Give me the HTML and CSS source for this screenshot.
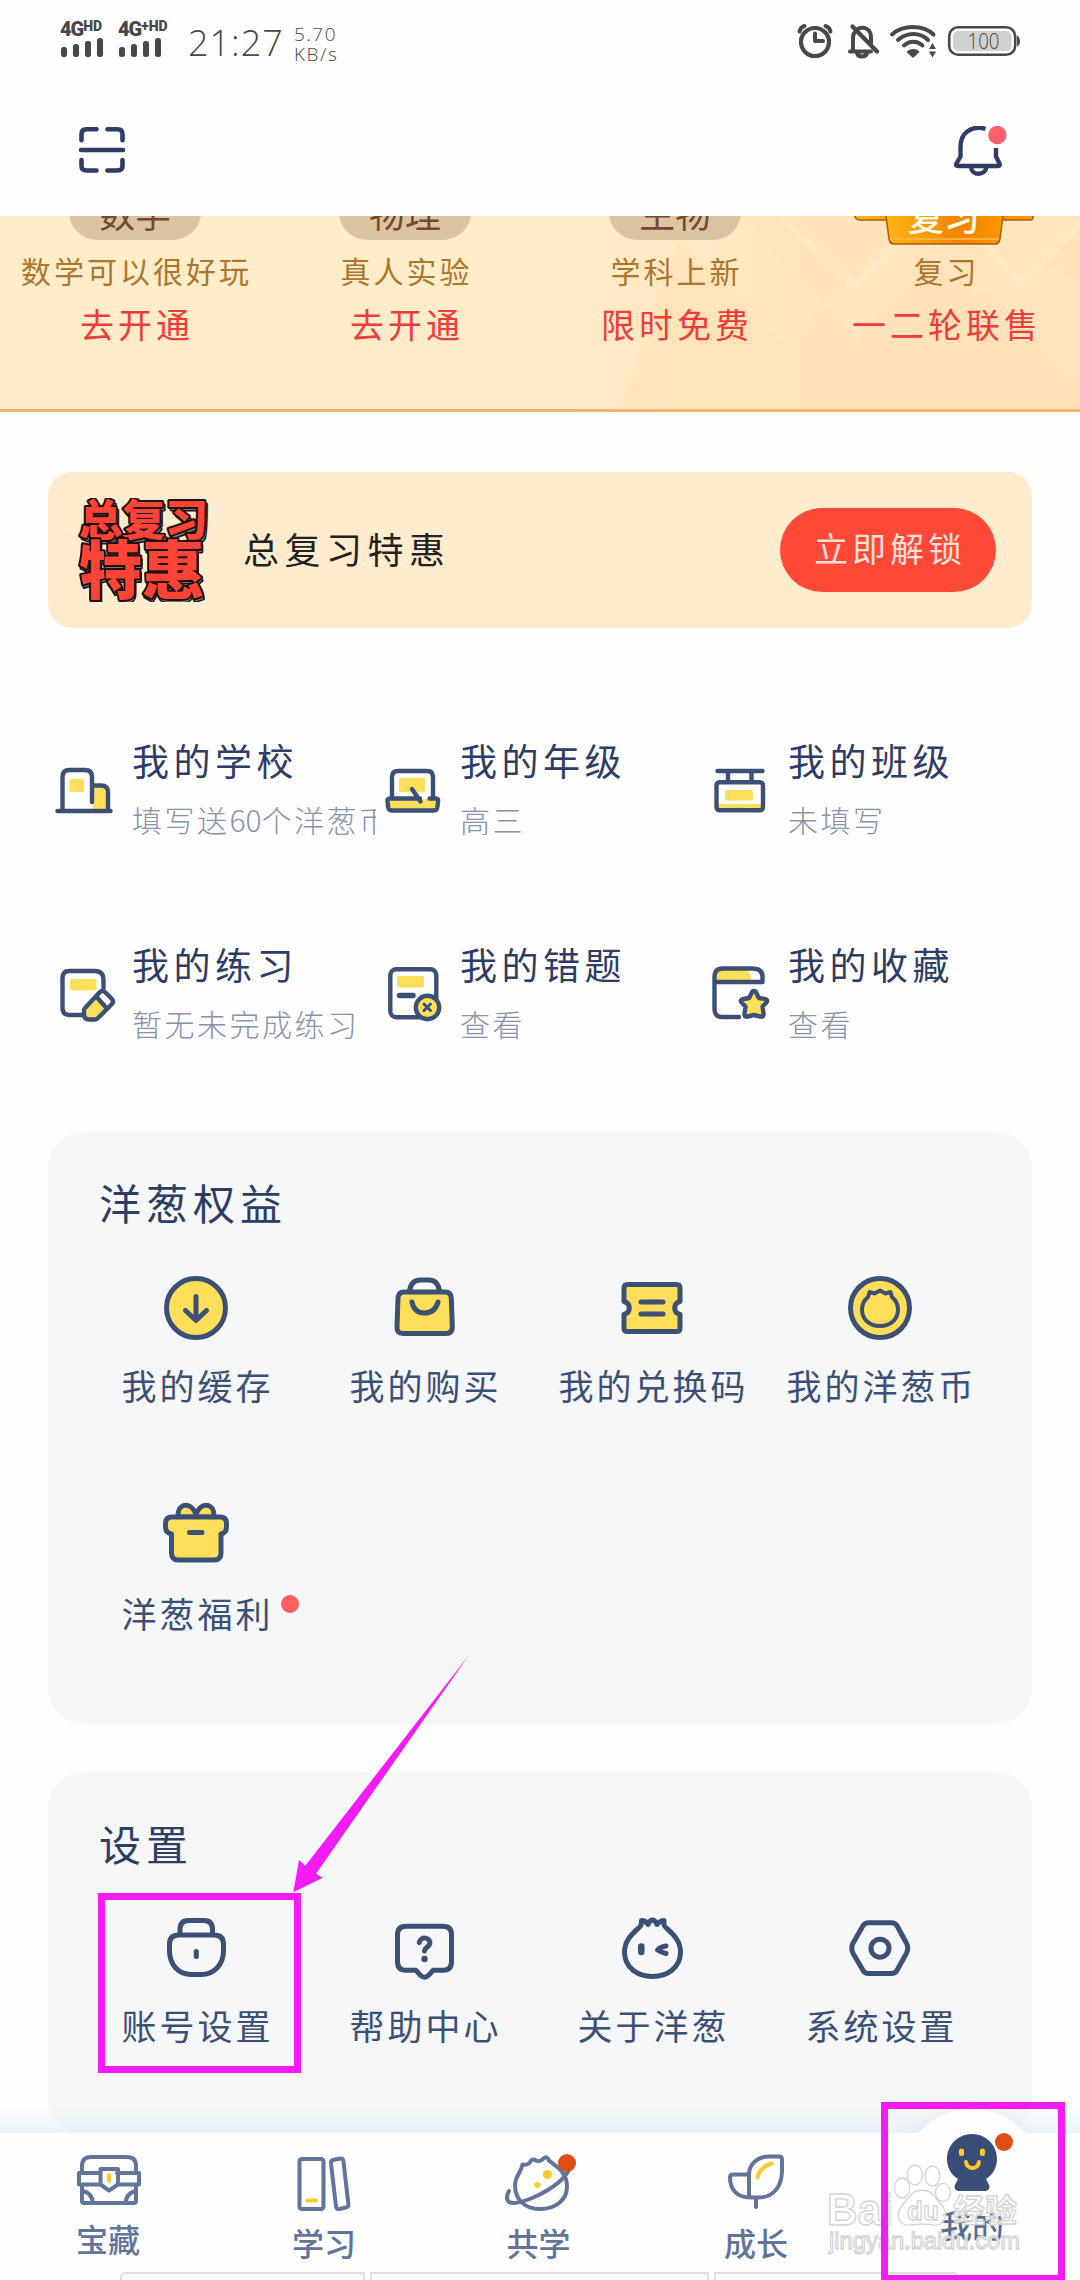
FILE: index.html
```html
<!DOCTYPE html>
<html lang="zh-CN">
<head>
    <meta charset="UTF-8">
    <meta name="viewport" content="width=device-width, initial-scale=1.0">
    <title>我的</title>
    <link rel="stylesheet" href="styles.css">
</head>
<body>
<div class="screen">

    <!-- Status Bar -->
    <div class="status-bar">
        <div class="signals">
            <div class="signal">
                <div class="signal-name">4G<sup>HD</sup></div>
                <div class="bars"><i class="b1"></i><i class="b2"></i><i class="b3"></i><i class="b4"></i></div>
            </div>
            <div class="signal">
                <div class="signal-name">4G<sup>+HD</sup></div>
                <div class="bars"><i class="b1"></i><i class="b2"></i><i class="b3"></i><i class="b4"></i></div>
            </div>
        </div>
        <div class="clock">21:27</div>
        <div class="speed"><span class="rate">5.70</span><span class="unit">KB/s</span></div>
        <svg class="status-icons" width="226" height="40" viewBox="796 22 226 40" fill="none" stroke="#484848" stroke-linecap="round">
            <circle cx="815" cy="43" r="14" stroke-width="4.2"/>
            <path d="M815 34.500v7.500h8" stroke-width="4" stroke-linejoin="round"/>
            <path d="M799.500 32.500q1-4.500 5-5.500M830.500 32.500q-1-4.500-5-5.500" stroke-width="4"/>
            <path d="M850 52.500h21M853 52V39c0-3.500 1.500-6 4-7.500M858.500 29.500c7-2.500 12.500 1.500 12.500 9V44M857 54c1 4.500 9 4.500 10 0" stroke-width="4"/>
            <path d="M852.500 27.500l24.500 25" stroke-width="4.400"/>
            <path d="M892 35.500c11-10 31-10 41.500 0M898 41c9-8 22-8 30 0M904 46.500c5.500-5 13-5 18.500 0" stroke-width="4"/>
            <path d="M906.500 53c3-4 10.500-4 13 0l-6.500 6z" fill="#484848" stroke="none"/>
            <path d="M929 50l3.500-6 3.500 6zM929 52.500l3.500 6 3.500-6z" fill="#484848" stroke="none"/>
            <rect x="949.200" y="28.200" width="66" height="27.600" rx="9" stroke-width="2.600"/>
            <rect x="953" y="32" width="58.500" height="20" rx="5.500" fill="#d0d0d0" stroke="none"/>
            <path d="M1017 36.500q3 1.500 3 5.500t-3 5.500z" fill="#484848" stroke="none"/>
            <text class="battery-text" x="983.500" y="49.500" text-anchor="middle" textLength="32" lengthAdjust="spacingAndGlyphs">100</text>
        </svg>
    </div>

    <!-- Header -->
    <div class="top-bar">
        <svg width="48" height="48" viewBox="78 126 48 48" fill="none" stroke="#2d3d66" stroke-width="4.600" stroke-linecap="round">
            <path d="M96.500 129.200h-10q-5 0-5 5v6M107.500 129.200h10q5 0 5 5v6M81.500 160v6q0 4.500 5 4.500h10M122.500 160v6q0 4.500-5 4.500h-10M81 150h42"/>
        </svg>
        <svg width="56" height="54" viewBox="952 125 56 54" fill="none" stroke="#2d3d66" stroke-width="4.400">
            <path d="M985.500 127.800C971 124 960.500 132 960.500 146V155.500L956.200 163q-.5 2 1.500 2h40.500q2 0 1.500-2L996 155.500V147"/>
            <path d="M971 166c.5 9 14.500 9 15.500 0"/>
            <circle cx="997.300" cy="134" r="9.200" fill="#ff606b" stroke="none"/>
        </svg>
    </div>

    <!-- Subject Banner, scrolled partly under the header -->
    <div class="banner">
        <svg class="banner-bg" width="1080" height="193" viewBox="0 216 1080 193">
            <g fill="#ffdfb2" opacity=".35">
                <path d="M680 240L850 409H620z"/>
                <path d="M745 216h170l-90 90z"/>
                <path d="M825 306l100 103H733z"/>
                <path d="M934 255l106 110-44 44H850l-30-30z"/>
                <path d="M1045 262l35-35v55z"/>
                <path d="M985 290l95 90v29H870z"/>
            </g>
            <path d="M780 216l75 70 75-70" fill="none" stroke="#fff1d4" stroke-width="8" opacity=".3"/>
            <path d="M960 216l60 68 60-60" fill="none" stroke="#fff1d4" stroke-width="7" opacity=".3"/>
        </svg>
        <div class="subjects">
            <div class="subject">
                <div class="pill">数学</div>
                <div class="subject-desc">数学可以很好玩</div>
                <div class="subject-link">去开通</div>
            </div>
            <div class="subject">
                <div class="pill">物理</div>
                <div class="subject-desc">真人实验</div>
                <div class="subject-link">去开通</div>
            </div>
            <div class="subject">
                <div class="pill">生物</div>
                <div class="subject-desc">学科上新</div>
                <div class="subject-link">限时免费</div>
            </div>
            <div class="subject">
                <svg class="badge-review" width="182" height="62" viewBox="854 184 182 62">
                    <defs>
                        <linearGradient id="gold">
                            <stop offset="0" stop-color="#ffb414"/>
                            <stop offset=".65" stop-color="#f28203"/>
                            <stop offset="1" stop-color="#fd9a00"/>
                        </linearGradient>
                    </defs>
                    <path d="M855 184h178v33q0 3-3 3H859q-2 0-4-3z" fill="url(#gold)" stroke="#a55d10" stroke-width="1.500"/>
                    <path d="M884 200h121l-5 39q-1 5-5 5H894q-4 0-5-5z" fill="url(#gold)" stroke="#a55d10" stroke-width="1.500"/>
                    <path d="M890 239h109" stroke="#ffb13a" stroke-width="2"/>
                    <text x="944" y="231" text-anchor="middle">复习</text>
                </svg>
                <div class="subject-desc">复习</div>
                <div class="subject-link">一二轮联售</div>
            </div>
        </div>
    </div>

    <!-- Promo Card -->
    <div class="promo">
        <svg class="promo-logo" width="134" height="104" viewBox="77 498 134 104">
            <text class="logo-shadow" x="81" y="539" font-size="43" textLength="129">总复习</text>
            <text class="logo-shadow" x="80" y="596" font-size="63" textLength="126">特惠</text>
            <text class="logo-face" x="79" y="536" font-size="43" textLength="129">总复习</text>
            <text class="logo-face" x="79" y="593" font-size="63" textLength="126">特惠</text>
        </svg>
        <span class="promo-text">总复习特惠</span>
        <a class="promo-button">立即解锁</a>
    </div>

    <!-- My Info Grid -->
    <div class="info-grid">
        <div class="info">
            <svg class="info-icon" viewBox="0 0 60 60">
                <path class="y" d="M39 26h8q5 0 5 6v19H39z"/>
                <rect class="y" x="15.600" y="19" width="14.500" height="13" rx="2"/>
                <path d="M8.500 51V17q0-7 7-7h15.500q7 0 7 7v25M38 25.500h9q7 0 7 6.500v19M3.500 51h53"/>
            </svg>
            <div class="info-body"><div class="info-title">我的学校</div><div class="info-sub">填写送<span class="num">60</span>个洋葱币</div></div>
        </div>
        <div class="info">
            <svg class="info-icon" viewBox="0 0 60 60">
                <rect class="y" x="17" y="17.700" width="26" height="14.500" rx="2"/>
                <path class="y" d="M6 39h50v8q0 4-4 4H10q-4 0-4-4z"/>
                <path d="M10 38V17q0-6 6-6h29q6 0 6 6v21M38 38.500H8q-3 0-2.500 3l.8 6q.5 3 3.500 3h42q3 0 3.500-3l.8-6q.5-3-2.500-3h-6M30 29l8.500 12.500"/>
            </svg>
            <div class="info-body"><div class="info-title">我的年级</div><div class="info-sub">高三</div></div>
        </div>
        <div class="info">
            <svg class="info-icon" viewBox="0 0 60 60">
                <rect class="y" x="15" y="30" width="28" height="10.500" rx="2"/>
                <path class="y" d="M6 44h47v6H6z"/>
                <path d="M7.500 11h45M18 12v9M41.500 12v9"/>
                <rect class="n" x="6.500" y="22.300" width="46.500" height="28" rx="3"/>
            </svg>
            <div class="info-body"><div class="info-title">我的班级</div><div class="info-sub">未填写</div></div>
        </div>
        <div class="info">
            <svg class="info-icon" viewBox="0 0 60 60">
                <rect class="y" x="16" y="15" width="26.500" height="11.500" rx="2"/>
                <path d="M49.500 24V16q0-9-9-9H15.500q-7 0-7 7v30q0 7 7 7H28"/>
                <path class="w" d="M31 44l14.500-15.500q3-3 6 0l6 6q3 3 0 6L43.500 54.500q-1 1-2.500 1h-6q-5 0-5-5v-4q0-1.500 1-2.500z"/>
                <path class="y" d="M31 44l12-11 10 11-9.500 10.500h-9q-4 0-4-4z"/>
                <path d="M31 44l14.500-15.500q3-3 6 0l6 6q3 3 0 6L43.500 54.500q-1 1-2.500 1h-6q-5 0-5-5v-4q0-1.500 1-2.500zM43.500 34l9 10"/>
            </svg>
            <div class="info-body"><div class="info-title">我的练习</div><div class="info-sub">暂无未完成练习</div></div>
        </div>
        <div class="info">
            <svg class="info-icon" viewBox="0 0 60 60">
                <rect class="y" x="15" y="12" width="27" height="11.500" rx="2"/>
                <rect class="n" x="8.300" y="5.300" width="46" height="48" rx="6"/>
                <path d="M17.500 31.500H31" stroke-width="5.500"/>
                <circle class="yb" cx="45.500" cy="43.500" r="11.700"/>
                <path d="M42 40l6.500 6.500M48.500 40L42 46.500" stroke-width="3"/>
            </svg>
            <div class="info-body"><div class="info-title">我的错题</div><div class="info-sub">查看</div></div>
        </div>
        <div class="info">
            <svg class="info-icon" viewBox="0 0 60 60">
                <path class="y" d="M4 17V12q0-6 6-6h23q8 0 8 9v2z"/>
                <path d="M29 53H12q-7.500 0-7.500-8V13q0-8.500 8-8.500h30q10 0 10 8.500v5h-48"/>
                <path class="yb" d="M44 27q1.500 0 2.300 1.800l2.500 5.200 6 1q4 1 1.200 4l-3.500 3.500 1 7q.4 4-3 3l-6.500-1.500-6.500 1.500q-3.400 1-3-3l1-7L32 39q-2.800-3 1.200-4l6-1 2.500-5.200Q42.500 27 44 27z"/>
            </svg>
            <div class="info-body"><div class="info-title">我的收藏</div><div class="info-sub">查看</div></div>
        </div>
    </div>

    <!-- Benefits Panel -->
    <div class="panel panel-benefits">
        <h2>洋葱权益</h2>
        <div class="panel-grid">
            <div class="entry">
                <svg class="entry-icon" viewBox="0 0 68 68">
                    <circle class="yb" cx="34" cy="34" r="29.500"/>
                    <path d="M34 22.500v23M23.500 36.500L34 46.500l10.500-10"/>
                </svg>
                <span>我的缓存</span>
            </div>
            <div class="entry">
                <svg class="entry-icon" viewBox="0 0 68 68">
                    <path d="M19.500 17q1.500-11 11-11h8q9.500 0 11 11"/>
                    <path class="yb" d="M14 18h41q6 0 6.300 6l1 29q0 6.500-6.300 6.500H13q-6.300 0-6-6.500l1-29q.5-6 6-6z"/>
                    <path d="M22 28q2 11 12.500 11T48 28"/>
                </svg>
                <span>我的购买</span>
            </div>
            <div class="entry">
                <svg class="entry-icon" viewBox="0 0 68 68">
                    <path class="yb" d="M9.500 10.500h49q3.500 0 3.500 3.500v13.500c-7 2-7 11 0 13V54q0 3.500-3.500 3.500h-49Q6 57.500 6 54V40.500c7-2 7-11 0-13V14q0-3.500 3.500-3.500z"/>
                    <path d="M23 28h22M23 40h22"/>
                </svg>
                <span>我的兑换码</span>
            </div>
            <div class="entry">
                <svg class="entry-icon" viewBox="0 0 68 68">
                    <circle class="yb" cx="34" cy="34" r="29.500"/>
                    <path d="M23.500 18l5 1.500 5.500-3 5.500 3 5-1.500 1.500 5c4 3.500 6 8 6 12.500 0 10-7.500 16.500-18 16.500S16 45.500 16 35.500c0-4.500 2-9 6-12.500z" stroke-width="4"/>
                </svg>
                <span>我的洋葱币</span>
            </div>
            <div class="entry has-dot">
                <svg class="entry-icon" viewBox="0 0 68 68">
                    <path class="yb" d="M16 15c-1-13 12-17 18-3 6-14 19-10 18 3z"/>
                    <path class="yb" d="M10 15h48q6.500 0 6.500 6v4q0 6-5.500 7v19q0 7-7 7H16.500q-7 0-7-7V32Q3.500 31 3.500 25v-4q0-6 6.500-6z"/>
                    <path d="M27.500 30.500H40" stroke-width="5"/>
                </svg>
                <span>洋葱福利</span>
            </div>
        </div>
    </div>

    <!-- Settings Panel -->
    <div class="panel panel-settings">
        <h2>设置</h2>
        <div class="panel-grid">
            <div class="entry">
                <svg class="entry-icon" viewBox="0 0 68 68">
                    <path d="M18 20v-4.500q0-9 8.500-9H42q8.500 0 8.500 9V20M17 21h35q9.500 0 9.500 9v7c0 14-10 23.500-22 23.500h-10.500C17 60.500 7.500 51 7.500 37v-7q0-9 9.500-9z"/>
                    <path d="M34.300 37.500v5" stroke-width="5"/>
                </svg>
                <span>账号设置</span>
            </div>
            <div class="entry">
                <svg class="entry-icon" viewBox="0 0 68 68">
                    <path d="M16 12.300h37q8.500 0 8.500 8.500v27q0 8.500-8.500 8.500H43l-4.500 5q-4 4-8 0L26 56.300H16q-8.500 0-8.500-8.500v-27q0-8.500 8.500-8.500z"/>
                    <path d="M29.300 28.500c1-6.500 11.500-5.500 10.500 1-.6 3.500-5 3.500-5.300 7.500"/>
                    <circle class="b" cx="34.500" cy="45" r="3.200"/>
                </svg>
                <span>帮助中心</span>
            </div>
            <div class="entry">
                <svg class="entry-icon" viewBox="0 0 68 68">
                    <path d="M23.500 6.500q4.500 0 6.500 4 2-4.500 4.500-4.500T39 10.500q3-4 7-4V11c1 4 16.500 11 16.500 27S49 62.500 34.500 62.500 6.500 54 6.500 38 22 15 23 11z"/>
                    <path d="M23.300 32.500V38" stroke-width="6.500"/>
                    <path d="M48 32q-6 1-8.500 4 3 2 8.500 3.500"/>
                </svg>
                <span>关于洋葱</span>
            </div>
            <div class="entry">
                <svg class="entry-icon" viewBox="-1 0 68 68">
                    <path d="M21.500 8.700h23q3.500 0 5.500 3l9.500 17.500q2.500 5 0 10L50 56.300q-2 3.200-5.500 3.200h-23q-3.500 0-5.500-3.200L6 39.200q-2.500-5 0-10l10-17.500q2-3 5.500-3z"/>
                    <circle class="n" cx="33" cy="34.200" r="9"/>
                </svg>
                <span>系统设置</span>
            </div>
        </div>
    </div>

    <!-- Bottom Tab Bar -->
    <div class="tab-fade"></div>
    <div class="tab-bump"></div>
    <div class="tab-bar">
        <div class="tab tab-first">
            <svg class="tab-icon" viewBox="76 2153 64 60">
                <path d="M82 2172v-6q0-9 9-9h36q9 0 9 9v6M82 2185v16q0 2 2 2h50q2 0 2-2v-16M100 2173H79v11.500h21M117 2173h22v11.500h-22M100.500 2169h17.500v15.500l-9 6-8.500-6zM83 2191q9 2 10 12M135.500 2191q-9 2-10 12"/>
                <path class="gold" d="M109 2175v6"/>
            </svg>
            <span>宝藏</span>
        </div>
        <div class="tab">
            <svg class="tab-icon" viewBox="292 2153 64 60">
                <rect x="299.500" y="2159" width="24" height="50" rx="2.500"/>
                <path d="M333 2160l7-1.500q3-.5 3.400 2.500l5 43q.3 3-2.500 3.500l-6.500 1.500q-3 .5-3.400-2.500l-5-43q-.3-3 2-3.500z"/>
                <path class="gold" d="M307 2200.500h9"/>
            </svg>
            <span>学习</span>
        </div>
        <div class="tab tab-together">
            <svg class="tab-icon" viewBox="507 2153 64 60">
                <path d="M522.500 2164.500q4 1 7-1.500 2.500-5.500 6.500-2.500 4 2 7-1.500 4-4 6 1.500c5 5 18 10 18 26 0 14-12 22.500-27 22.500s-25-9-25-24c0-9 6-12 7.500-20.500z"/>
                <path d="M509 2191q-3.500 6-1 10c6 8 50-11 61-31"/>
                <circle class="goldf" cx="547.500" cy="2174.500" r="4.500"/><circle class="goldf" cx="537.500" cy="2185" r="3"/>
                <circle cx="567" cy="2163" r="9" class="red"/>
            </svg>
            <span>共学</span>
        </div>
        <div class="tab">
            <svg class="tab-icon" viewBox="724 2153 64 60">
                <path d="M749 2174.500h-16q-3 0-3 3c0 13 8 20 20 20h9c15 0 23-12 23-27v-11q0-3-3-3h-10c-13 0-20 9-20 18v23M756 2198v9" />
                <path class="gold" d="M757.500 2177.500q2-10 14-14"/>
            </svg>
            <span>成长</span>
        </div>
        <div class="tab tab-active">
            <svg class="tab-icon" viewBox="940 2133 64 60">
                <path d="M972 2134c14 0 25 11 25 25 0 8-4 16-11 20l2 4c3 4 1 8-3 8h-26c-4 0-6-4-3-8l2-4c-7-4-11-12-11-20 0-14 11-25 25-25z" fill="#384e76" stroke="none"/>
                <path class="gold" d="M961.500 2151v2.500M982.500 2151v2.500" stroke-width="5"/>
                <path class="gold" d="M966 2162c1 8 12 8 13 0"/>
                <circle cx="1004" cy="2142" r="9" class="red"/>
            </svg>
            <span>我的</span>
        </div>
    </div>
    <div class="strips"><i></i><i></i><i></i></div>

    <!-- Watermark -->
    <svg class="watermark" width="210" height="100" viewBox="822 2160 210 100">
        <g fill="#fff" fill-opacity=".75" stroke="#d4d4d4" stroke-width="1.300">
            <ellipse cx="902" cy="2188" rx="7.500" ry="10"/><ellipse cx="915" cy="2175" rx="7.500" ry="10"/>
            <ellipse cx="932.500" cy="2176" rx="7.500" ry="10"/><ellipse cx="943" cy="2192.500" rx="7.500" ry="9"/>
            <path d="M909 2197c6-9 20-9 26 0l8 10c6 9 1 19-9 18-7-1-17-1-24 0-11 1-15-9-9-18z"/>
            <text x="827" y="2225" font-size="45" font-weight="700" textLength="66" lengthAdjust="spacingAndGlyphs">Bai</text>
            <text x="907" y="2220" font-size="26" font-weight="700">du</text>
            <text x="953" y="2222" font-size="32" font-weight="700">经验</text>
            <text x="829" y="2249" font-size="24" textLength="191" lengthAdjust="spacingAndGlyphs">jingyan.baidu.com</text>
        </g>
    </svg>

    <!-- Guide marks -->
    <div class="mark mark-account"></div>
    <div class="mark mark-mine"></div>
    <svg class="mark-arrow" width="180" height="240" viewBox="292 1654 180 240">
        <path d="M293.300 1892.300L299 1860l6.300 5.700L469 1655 316 1873.700l6.700 4z" fill="#f51bf5"/>
    </svg>
</div>
</body>
</html>
```

FILE: styles.css
```css
* {
    box-sizing: border-box;
}
body {
    margin: 0;
    background-color: #fff;
    color: #2d3d66;
    font-family: 'Noto Sans CJK SC', sans-serif;
}
.screen {
    position: relative;
    width: 1080px;
    height: 2280px;
    overflow: hidden;
    background-color: #fefefe;
}

/* status bar */
.status-bar {
    display: flex;
    height: 84px;
    padding: 21px 58px 0 60px;
    color: #484848;
}
.signals {
    display: flex;
    width: 128px;
}
.signal {
    width: 58px;
}
.signal-name {
    height: 16px;
    font: 900 20px/17px Roboto, sans-serif;
    white-space: nowrap;
    letter-spacing: -1px;
}
.signal-name sup {
    font-size: 14px;
    line-height: 0;
    vertical-align: 5px;
    letter-spacing: 0;
}
.bars {
    display: flex;
    align-items: flex-end;
    gap: 6px;
    height: 20px;
    padding-left: 1px;
}
.bars i {
    width: 6px;
    border-radius: 2.5px;
    background-color: #484848;
}
.b1 { height: 10px; }
.b2 { height: 13px; }
.b3 { height: 16px; }
.b4 { height: 19px; }
.clock {
    width: 106px;
    font: 300 36px/44px 'Open Sans', 'Noto Sans', sans-serif;
    letter-spacing: 1px;
}
.speed {
    display: flex;
    flex-direction: column;
    font: 300 19px/20px 'Open Sans', 'Noto Sans', sans-serif;
    padding-top: 3px;
}
.rate {
    letter-spacing: 1.5px;
}
.unit {
    letter-spacing: 1.5px;
}
.status-icons {
    margin-left: auto;
}
.battery-text {
    font: 300 22px 'Open Sans', sans-serif;
    fill: #484848;
    stroke: none;
}

/* header */
.top-bar {
    display: flex;
    justify-content: space-between;
    height: 132px;
    padding: 42px 72px 0 78px;
}

/* subject banner */
.banner {
    position: relative;
    height: 196px;
    overflow: hidden;
    background: linear-gradient(90deg, #ffecc8 50%, #ffe5bd 75%);
    border-bottom: 3px solid #f0b66e;
}
.banner-bg {
    position: absolute;
    left: 0;
    top: 0;
}
.subjects {
    position: relative;
    display: flex;
    margin-top: -32px;
}
.subject {
    display: flex;
    flex-direction: column;
    align-items: center;
    width: 270px;
}
.pill {
    width: 132px;
    height: 56px;
    border-radius: 28px;
    background-color: #dcc4a3;
    color: #75492e;
    font-size: 36px;
    line-height: 56px;
    text-align: center;
}
.badge-review {
    height: 62px;
    margin-bottom: -6px;
}
.badge-review text {
    font-size: 36px;
    font-weight: 500;
    fill: #fffbe6;
}
.subject-desc {
    margin-top: 8px;
    font-size: 30px;
    line-height: 44px;
    letter-spacing: 3px;
    text-indent: 3px;
    color: #ad762f;
}
.subject-link {
    margin-top: 8px;
    font-size: 34px;
    line-height: 48px;
    letter-spacing: 4px;
    text-indent: 4px;
    color: #ef3b3a;
}

/* promo card */
.promo {
    display: flex;
    align-items: center;
    width: 984px;
    height: 156px;
    margin: 60px auto 0;
    padding: 0 36px 0 29px;
    border-radius: 24px;
    background-color: #ffebce;
}
.promo-logo text {
    font-weight: 900;
    paint-order: stroke;
    stroke-linejoin: round;
}
.logo-shadow {
    fill: #777;
    stroke: #1d1111;
    stroke-width: 3px;
}
.logo-face {
    fill: #ff4336;
    stroke: #1d1111;
    stroke-width: 4px;
}
.promo-text {
    margin: -5px 0 0 32px;
    font-size: 36px;
    letter-spacing: 5.5px;
    color: #222;
}
.promo-button {
    width: 216px;
    height: 84px;
    margin-left: auto;
    border-radius: 42px;
    background-color: #ff4836;
    color: #ffdfda;
    font-size: 34px;
    line-height: 80px;
    letter-spacing: 4px;
    text-indent: 4px;
    text-align: center;
}

/* my info grid */
.info-grid {
    display: grid;
    grid-template-columns: repeat(3, 328px);
    grid-auto-rows: 204px;
    height: 408px;
    margin: 96px 48px 0;
}
.info {
    display: flex;
    padding-left: 6px;
}
.info-icon {
    flex: none;
    width: 60px;
    height: 60px;
    margin: 36px 18px 0 0;
    overflow: visible;
}
.info-icon,
.entry-icon {
    fill: none;
    stroke: #3c5075;
    stroke-width: 4.4;
    stroke-linecap: round;
    stroke-linejoin: round;
}
.y {
    fill: #ffdf59;
    stroke: none;
}
.yb {
    fill: #ffdf59;
}
.w {
    fill: #fefefe;
    stroke: none;
}
.b {
    fill: #3c5075;
    stroke: none;
}
.n {
    fill: none;
}
.info-body {
    flex: 1;
    overflow: hidden;
    white-space: nowrap;
}
.info-title {
    margin-top: 10px;
    font-size: 37px;
    line-height: 52px;
    letter-spacing: 4.5px;
    color: #2d3d66;
}
.info-sub {
    margin-top: 11px;
    font-size: 30px;
    font-weight: 300;
    line-height: 44px;
    letter-spacing: 2.5px;
    color: #8793ab;
}
.num {
    letter-spacing: 0;
}

/* panels */
.panel {
    width: 984px;
    margin: 0 auto;
    padding: 40px 34px 0;
    border-radius: 36px;
    background-color: #f5f7f9;
}
.panel-benefits {
    height: 592px;
}
.panel-settings {
    height: 364px;
    margin-top: 48px;
    padding-top: 41px;
}
.panel h2 {
    margin: 0 0 42px 17px;
    font-size: 42px;
    font-weight: 400;
    line-height: 60px;
    letter-spacing: 5px;
    color: #2d3d66;
}
.panel-settings h2 {
    margin-bottom: 41px;
}
.panel-grid {
    display: grid;
    grid-template-columns: repeat(4, 228px);
    grid-auto-rows: 228px;
}
.entry {
    position: relative;
    display: flex;
    flex-direction: column;
    align-items: center;
}
.entry-icon {
    width: 68px;
    height: 68px;
    stroke-width: 5;
}
.entry span {
    margin-top: 21px;
    font-size: 35px;
    line-height: 44px;
    letter-spacing: 3px;
    text-indent: 3px;
    white-space: nowrap;
    color: #3c5075;
}
.has-dot::after {
    content: '';
    position: absolute;
    top: 93px;
    left: 199px;
    width: 18px;
    height: 18px;
    border-radius: 50%;
    background-color: #ff5f5f;
}

/* bottom tab bar */
.tab-fade {
    position: absolute;
    left: 0;
    top: 2105px;
    width: 1080px;
    height: 28px;
    background: linear-gradient(rgba(220, 241, 250, 0), rgba(220, 241, 250, 0.6));
}
.tab-bump {
    position: absolute;
    left: 900px;
    top: 2109px;
    width: 144px;
    height: 171px;
    border-radius: 72px 72px 0 0;
    background-color: #fefefe;
    box-shadow: 0 0 14px rgba(60, 80, 117, 0.06);
}
.tab-bar {
    position: absolute;
    left: 0;
    top: 2133px;
    display: flex;
    width: 1080px;
    height: 147px;
    background-color: #fefefe;
}
.tab {
    display: flex;
    flex-direction: column;
    align-items: center;
    width: 216px;
    padding-top: 20px;
    color: #62749a;
    font-size: 32px;
    font-weight: 500;
    line-height: 42px;
}
.tab span {
    margin-top: 8px;
}
.tab-first span {
    margin-top: 4px;
}
.tab-together {
    padding-right: 3px;
}
.tab-active {
    padding-top: 0;
    color: #5b6c8f;
}
.tab-active span {
    margin-top: 10px;
}
.tab-icon {
    width: 64px;
    height: 60px;
    overflow: visible;
    fill: none;
    stroke: #62749a;
    stroke-width: 4;
    stroke-linecap: round;
    stroke-linejoin: round;
}
.gold {
    stroke: #ffc928;
}
.goldf {
    fill: #ffc928;
    stroke: none;
}
.red {
    fill: #e04c18;
    stroke: none;
}
.strips {
    position: absolute;
    left: 120px;
    top: 2272px;
    display: grid;
    grid-template-columns: 245px 339px 245px;
    gap: 5px;
}
.strips i {
    height: 12px;
    border: 2px solid #dedede;
}
.strips i:first-child {
    border-top-left-radius: 6px;
}
.strips i:last-child {
    border-top-right-radius: 6px;
}

/* watermark and guide marks */
.watermark {
    position: absolute;
    left: 822px;
    top: 2160px;
    font-family: 'Liberation Sans', 'Noto Sans CJK SC', sans-serif;
}
.mark {
    position: absolute;
    border: 7px solid #f51bf5;
}
.mark-account {
    left: 98px;
    top: 1893px;
    width: 203px;
    height: 180px;
}
.mark-mine {
    left: 881px;
    top: 2102px;
    width: 184px;
    height: 180px;
}
.mark-arrow {
    position: absolute;
    left: 292px;
    top: 1654px;
}
```
